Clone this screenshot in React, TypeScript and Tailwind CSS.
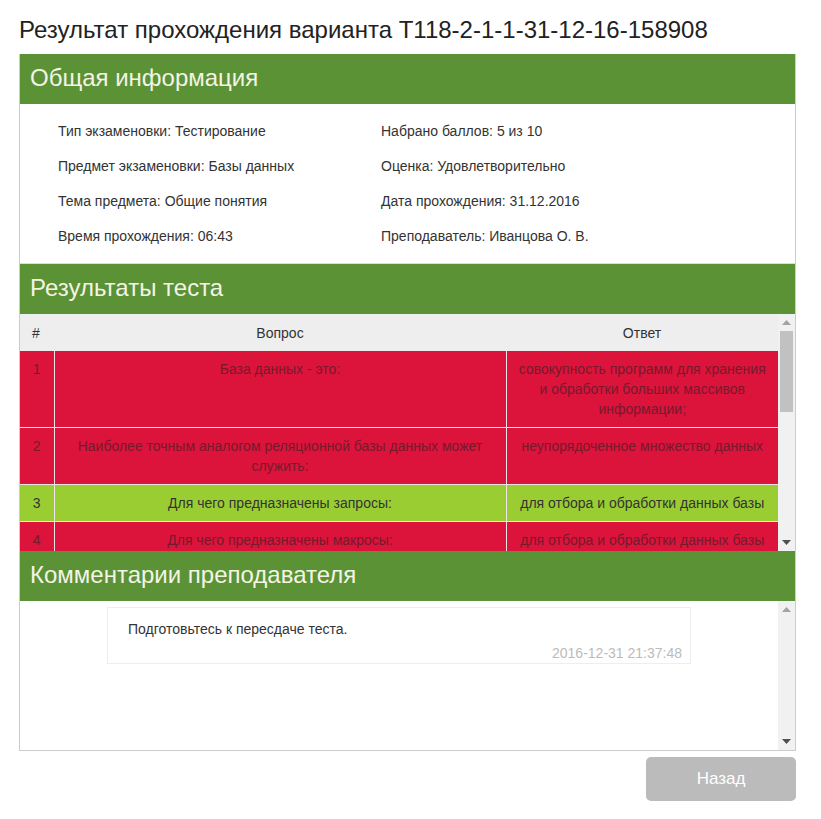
import React from "react";

const font = { fontFamily: '"Liberation Sans", Arial, sans-serif' };

function Scrollbar({ thumb }: { thumb?: boolean }) {
  return (
    <div className="w-[17px] shrink-0 bg-[#f1f1f1] flex flex-col items-center justify-between py-[6px] relative">
      <svg width="9" height="5" viewBox="0 0 9 5">
        <path d="M0 5 L4.5 0 L9 5 Z" fill="#a3a3a3" />
      </svg>
      {thumb && (
        <div className="absolute left-[2px] top-[17px] w-[13px] h-[81px] bg-[#c1c1c1]" />
      )}
      <svg width="9" height="5" viewBox="0 0 9 5">
        <path d="M0 0 L9 0 L4.5 5 Z" fill="#505050" />
      </svg>
    </div>
  );
}

function Header({ children }: { children: React.ReactNode }) {
  return (
    <div className="h-[50px] bg-[#5b9236] flex items-center px-[10px] pb-[3px] text-[24px] text-[#f4f4e4]">
      {children}
    </div>
  );
}

const rows = [
  {
    n: 1,
    q: "База данных - это:",
    a: "совокупность программ для хранения и обработки больших массивов информации;",
    ok: false,
  },
  {
    n: 2,
    q: "Наиболее точным аналогом реляционной базы данных может служить:",
    a: "неупорядоченное множество данных",
    ok: false,
  },
  { n: 3, q: "Для чего предназначены запросы:", a: "для отбора и обработки данных базы", ok: true },
  { n: 4, q: "Для чего предназначены макросы:", a: "для отбора и обработки данных базы", ok: false },
];

export default function App() {
  return (
    <div className="w-[821px] h-[819px] bg-white text-[#333] px-[19px] pt-[15px]" style={font}>
      <h1 className="text-[24px] leading-[30px] mb-[9px] text-[#222]">
        Результат прохождения варианта T118-2-1-1-31-12-16-158908
      </h1>
      <div className="w-[777px] border-l border-r border-b border-[#cccccc]">
        <Header>Общая информация</Header>
        <div className="grid grid-cols-[323px_1fr] gap-y-[15px] pl-[38px] pt-[17px] pb-[17px] text-[14px] leading-[20px] border-b border-[#dddddd]">
          <div>Тип экзаменовки: Тестирование</div>
          <div>Набрано баллов: 5 из 10</div>
          <div>Предмет экзаменовки: Базы данных</div>
          <div>Оценка: Удовлетворительно</div>
          <div>Тема предмета: Общие понятия</div>
          <div>Дата прохождения: 31.12.2016</div>
          <div>Время прохождения: 06:43</div>
          <div>Преподаватель: Иванцова О. В.</div>
        </div>
        <Header>Результаты теста</Header>
        <div className="flex h-[237px]">
          <div className="flex-1 overflow-hidden">
            <table className="w-full border-collapse text-[14px] leading-[20px] table-fixed">
              <colgroup>
                <col className="w-[34px]" />
                <col className="w-[452px]" />
                <col />
              </colgroup>
              <thead>
                <tr className="bg-[#eeeeee] h-[37px]">
                  <th className="font-normal text-left pl-[12px] h-[37px]">#</th>
                  <th className="font-normal h-[37px]">Вопрос</th>
                  <th className="font-normal h-[37px]">Ответ</th>
                </tr>
              </thead>
              <tbody>
                {rows.map((r) => (
                  <tr
                    key={r.n}
                    className={
                      r.ok
                        ? "bg-[#9acd32] text-[#333]"
                        : "bg-[#dc143c] text-[#761a2b]"
                    }
                  >
                    <td className="align-top text-center py-[8px] border-r border-b border-[#eee3e3]">
                      {r.n}
                    </td>
                    <td className="align-top text-center py-[8px] px-[10px] border-r border-b border-[#eee3e3]">
                      {r.q}
                    </td>
                    <td className="align-top text-center py-[8px] px-[10px] border-b border-[#eee3e3]">
                      {r.a}
                    </td>
                  </tr>
                ))}
              </tbody>
            </table>
          </div>
          <Scrollbar thumb />
        </div>
        <Header>Комментарии преподавателя</Header>
        <div className="flex h-[149px]">
          <div className="flex-1 pt-[6px] flex justify-center">
            <div className="w-[584px] h-[57px] border border-[#eeeeee] pl-[20px] pr-[8px] pt-[11px] text-[14px] leading-[20px] flex flex-col">
              <div>Подготовьтесь к пересдаче теста.</div>
              <div className="text-right text-[#bbbbbb] leading-[20px] mt-[4px]">
                2016-12-31 21:37:48
              </div>
            </div>
          </div>
          <Scrollbar />
        </div>
      </div>
      <div className="flex justify-end w-[777px] mt-[6px]">
        <button className="w-[150px] h-[44px] rounded-[5px] bg-[#bbbbbb] text-white text-[17px]">
          Назад
        </button>
      </div>
    </div>
  );
}
